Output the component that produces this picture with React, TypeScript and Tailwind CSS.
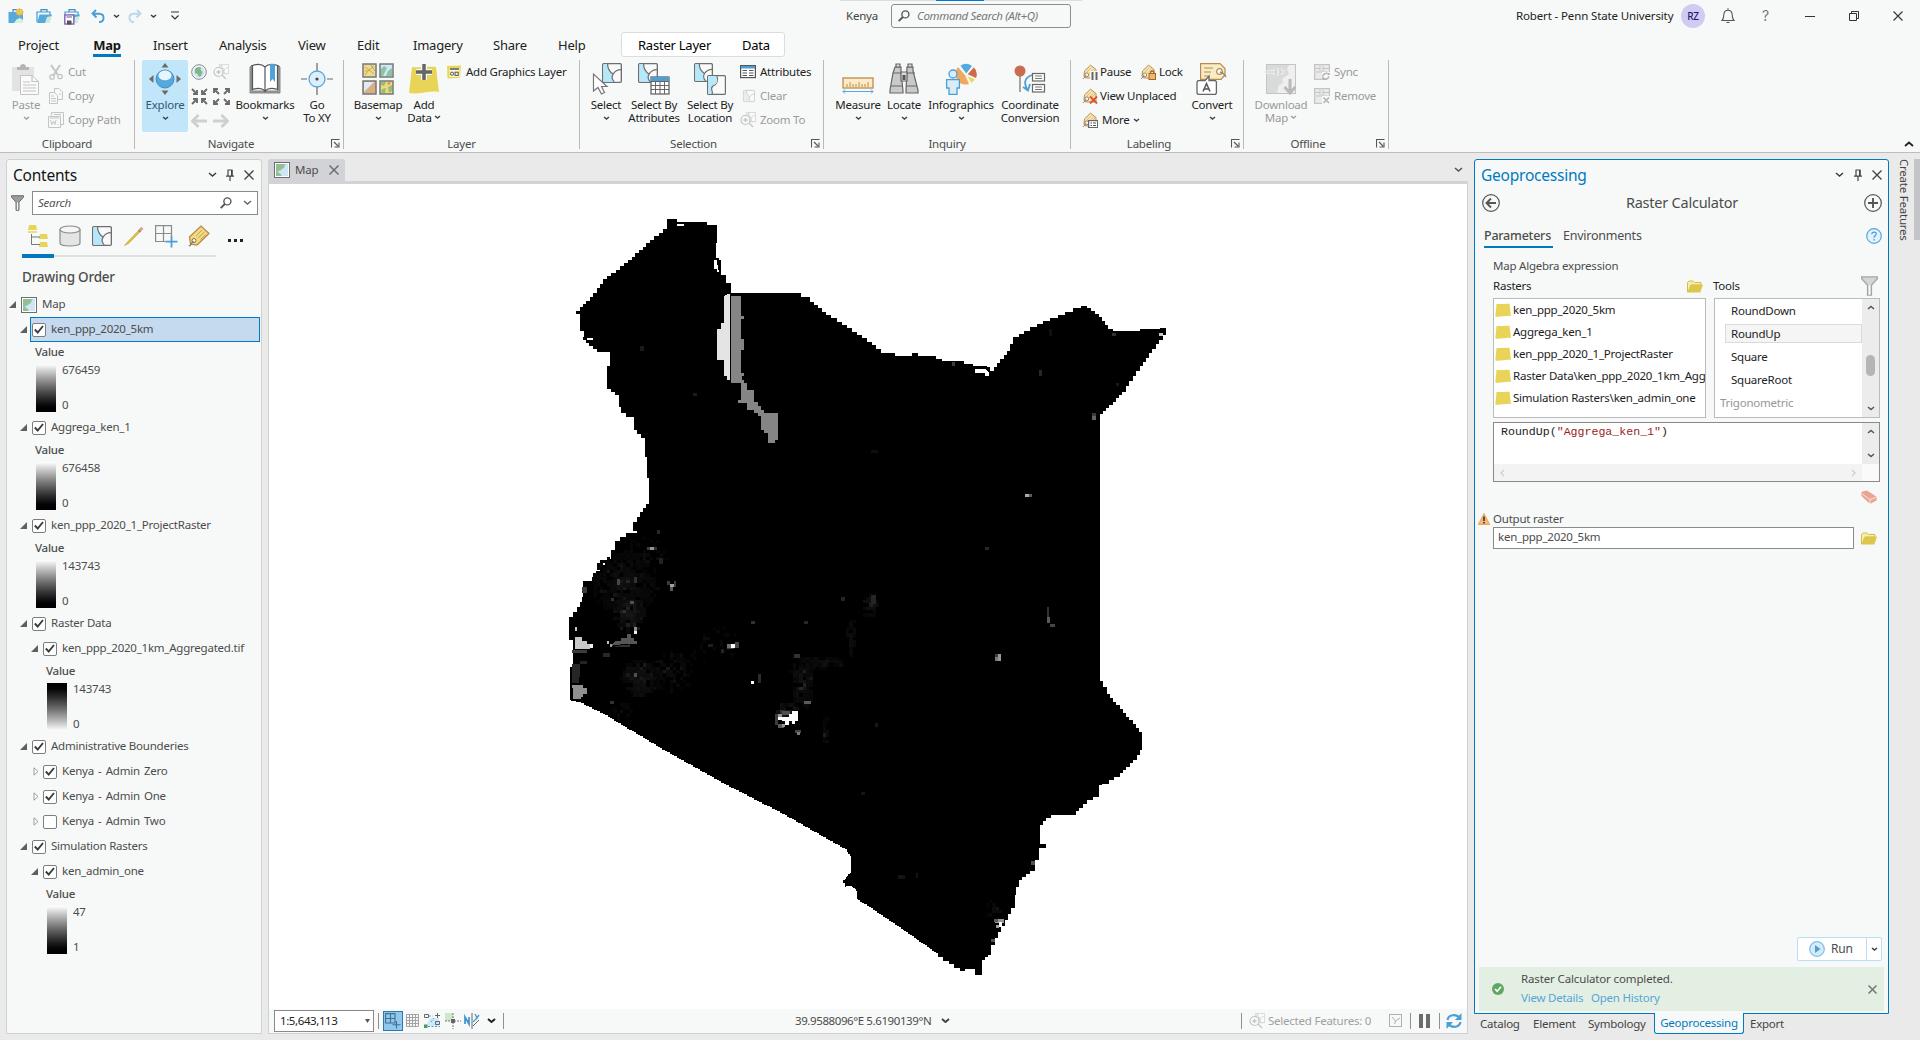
import React from "react";

type Kids = { children?: React.ReactNode };

/* ---------- icon primitives ---------- */

function Svg({ w, h, children, cls = "" }: Kids & { w: number; h: number; cls?: string }) {
  return (
    <svg width={w} height={h} viewBox={`0 0 ${w} ${h}`} fill="none" className={"block shrink-0 " + cls}>
      {children}
    </svg>
  );
}

function Chevron({ c = "#3c3c3c", w = 8, sw = 1.5, up = false }: { c?: string; w?: number; sw?: number; up?: boolean }) {
  const h = w / 2;
  const d = up ? `M1 ${h + 1}L${w / 2 + 1} 1.5L${w + 1} ${h + 1}` : `M1 1L${w / 2 + 1} ${h + 0.5}L${w + 1} 1`;
  return (
    <Svg w={w + 2} h={h + 2}>
      <path d={d} stroke={c} strokeWidth={sw} />
    </Svg>
  );
}

const Close = ({ s = 10, c = "#444", sw = 1.4 }: { s?: number; c?: string; sw?: number }) => (
  <Svg w={s} h={s}>
    <path d={`M.5 .5L${s - 0.5} ${s - 0.5}M${s - 0.5} .5L.5 ${s - 0.5}`} stroke={c} strokeWidth={sw} />
  </Svg>
);

const Pin = () => (
  <Svg w={8} h={12}>
    <path d="M2 1V7M6 1V7M1.5 1H6.5M0 7.2H8M4 7V12" stroke="#444" strokeWidth="1.2" />
    <path d="M5 1H6.5V7H5Z" fill="#444" />
  </Svg>
);

const Magnifier = ({ c = "#555", s = 12 }: { c?: string; s?: number }) => (
  <svg width={s} height={s} viewBox="0 0 12 12" fill="none" className="block shrink-0">
    <circle cx="7.4" cy="4.4" r="3.5" stroke={c} strokeWidth="1.4" />
    <path d="M4.8 7L.7 11.2" stroke={c} strokeWidth="1.8" />
  </svg>
);

const MapIcon = () => (
  <Svg w={16} h={16}>
    <rect x=".5" y=".5" width="15" height="15" fill="#fff" stroke="#6e6e6e" />
    <rect x="2" y="2" width="12" height="12" fill="#cfe6f5" />
    <path d="M2 2H12L10.500 3.500L10 6L8 7L6.500 8.500L4 9L2 11Z" fill="#93bf94" />
    <path d="M2 11L4 9L5 11L7 12L7.500 14H2Z" fill="#93bf94" />
  </Svg>
);

const FolderIcon = () => (
  <Svg w={16} h={13}>
    <path d="M.5 12V2.5L2 1H6L7.5 2.5H14V5H4L1 12Z" fill="#f6edb0" stroke="#d3bf45" />
    <path d="M3.8 4.8H16L13.3 12.5H.8Z" fill="#dcc64c" />
  </Svg>
);

const Funnel = ({ w = 13, h = 16, f = "#9b9b9b", s = "#6e6e6e" }) => (
  <svg width={w} height={h} viewBox="0 0 13 16" fill="none" className="block shrink-0" preserveAspectRatio="none">
    <path d="M.5 .7H12.5V2.2L8 7.2V15.3H5V7.2L.5 2.2Z" fill={f} stroke={s} />
    <path d="M6.5 7.4V15" stroke="#f7f9f8" strokeWidth="1.2" />
  </svg>
);

const SelTile = ({ x = 0, y = 0, s = 18, c = "#6e6e6e", f = "#b5e8fa" }) => (
  <g transform={`translate(${x} ${y}) scale(${s / 18})`}>
    <rect x=".6" y=".6" width="16.8" height="16.8" rx="1" fill="#fafafa" stroke={c} strokeWidth="1.2" />
    <path d="M1.2 1.2H5C5 6 7 8 10 10C8.5 12.5 9 15 11 16.8H1.2Z" fill={f} />
    <path d="M5 .6C5 6 7 8 10 10C8.5 12.5 9 15 11 17M10 10C11.5 7.5 14 6 17 6" stroke={c} strokeWidth="1.1" fill="none" />
  </g>
);

const Tag = ({ children }: Kids) => (
  <Svg w={16} h={16}>
    <path d="M2.5 7L8.5 1.2L14 5.5V14H3.5L2 12Z" fill="#f6e3b0" stroke="#b98a50" />
    <path d="M5 8L9 4M7 9.5L11.5 5M10 9L13 6" stroke="#dcbf85" />
    <circle cx="4.8" cy="10.8" r="1.9" fill="#fff" stroke="#9c8262" />
    <path d="M4.5 11C3 12 3 14 .8 14.8" stroke="#888" />
    {children}
  </Svg>
);

const LegendDoc = () => (
  <Svg w={16} h={14}>
    <path d="M1 1L15 .5L14 13L1.5 13.5Z" fill="#e9d65a" />
    <rect x="3.5" y="3" width="10" height="9" fill="#fbf6cf" />
    <path d="M4 4H13" stroke="#555" strokeWidth="1.5" />
    <circle cx="6" cy="8.7" r="1.6" stroke="#555" />
    <rect x="9" y="7.2" width="3.2" height="3.2" stroke="#555" />
  </Svg>
);

/* ---------- title bar ---------- */

const ProjBox = ({ open = false }: { open?: boolean }) => (
  <>
    <path d="M5 4V1.7H11V4" stroke="#3f8fc4" strokeWidth="1.2" />
    {open ? (
      <>
        <path d="M1 14V4H14V7" stroke="#3f9bd6" strokeWidth="1.2" />
        <path d="M3.5 6.5H16L13 15H1Z" fill="#56a9dd" />
        <path d="M9 15L11 9L15.5 8L13.5 15Z" fill="#cdeadf" />
      </>
    ) : (
      <>
        <rect x=".5" y="4" width="14.5" height="11" fill="#56a9dd" />
        <path d="M6 15L9 11L12 10L15 12V15Z" fill="#d9efe0" />
      </>
    )}
  </>
);

function TitleBar() {
  return (
    <div className="flex h-8 shrink-0 items-start">
      <div className="flex h-8 w-[840px] items-center">
        <div className="ml-2">
          <Svg w={16} h={16}>
            <ProjBox />
            <circle cx="11.5" cy="4" r="3" fill="#f4dd74" stroke="#dfb93c" />
            <path d="M11.5 -.5V8.5M7 4H16M8.5 1L14.5 7M14.5 1L8.5 7" stroke="#e3c04d" strokeWidth=".9" />
          </Svg>
        </div>
        <div className="ml-3"><Svg w={16} h={16}><ProjBox open /></Svg></div>
        <div className="ml-3">
          <Svg w={16} h={17}>
            <ProjBox open />
            <rect x=".8" y="7" width="9" height="9" fill="#fff" stroke="#8b6bb0" strokeWidth="1.5" />
            <rect x="2.5" y="7" width="5.5" height="3" fill="#b9a4cf" />
            <rect x="3" y="12.5" width="4.5" height="4" fill="#555" />
          </Svg>
        </div>
        <div className="ml-[11px]"><Svg w={14} h={14}><path d="M5 1L1.5 4.5L5.5 8.5M2 4.7H8.5C14 5 14 13 8 13" stroke="#4b9fd6" strokeWidth="1.9" /></Svg></div>
        <div className="ml-2"><Chevron w={5} /></div>
        <div className="ml-2"><Svg w={14} h={14}><path d="M9 1L12.500 4.500L8.500 8.500M12 4.700H5.500C0 5 0 13 6 13" stroke="#b9d8ec" strokeWidth="1.9" /></Svg></div>
        <div className="ml-2"><Chevron w={5} /></div>
        <div className="ml-[13px]"><Svg w={10} h={10}><path d="M1 1H9M1.500 4.500L5 8L8.500 4.500" stroke="#333" strokeWidth="1.2" /></Svg></div>
      </div>
      <div className="flex h-8 w-[242px] flex-col">
        <div className="flex h-px bg-[#dcdcdc] pl-24"><div className="w-12 bg-[#0078d4]" /></div>
        <div className="mt-[3px] flex h-6 items-center pl-[6px]">
          <span className="w-[45px] text-[#444]">Kenya</span>
          <div className="flex h-6 w-[180px] items-center rounded-[3px] border border-[#8e8e8e] pl-[6px]">
            <Magnifier />
            <span className="ml-[7px] italic tracking-[-0.03em] text-[#777]">Command Search (Alt+Q)</span>
          </div>
        </div>
      </div>
      <div className="flex h-8 flex-1 items-center">
        <span className="ml-[434px] w-[165px] tracking-[-0.012em] text-[#222]">Robert - Penn State University</span>
        <div className="flex size-6 items-center justify-center rounded-full bg-[#cfcbf3] text-[10px] font-medium text-[#1d1a6b]">RZ</div>
        <div className="ml-4">
          <Svg w={14} h={16}><path d="M1 12.500H13C11 10.500 11.500 9 11.200 6.500C11 3.500 9.500 2.200 7 2.200C4.500 2.200 3 3.500 2.800 6.500C2.500 9 3 10.500 1 12.500ZM7 2V.3M5.500 14.500H8.500" stroke="#555" strokeWidth="1.100" /></Svg>
        </div>
        <span className="ml-[27px] w-2 font-['Inter'] text-[14px] text-[#777]">?</span>
        <div className="ml-[35px] h-px w-[10px] bg-[#333]" />
        <div className="ml-[34px]"><Svg w={10} h={10}><path d="M.5 2.500H7.500V9.500H.500ZM2.500 2.500V.5H9.500V7.500H7.500" stroke="#333" /></Svg></div>
        <div className="ml-[34px]"><Close s={10} c="#333" sw={1.100} /></div>
      </div>
    </div>
  );
}

function TabRow() {
  const tabs: [string, string][] = [
    ["Insert", "w-[66px]"],
    ["Analysis", "w-[79px]"],
    ["View", "w-[59px]"],
    ["Edit", "w-[56px]"],
    ["Imagery", "w-[80px]"],
    ["Share", "w-[65px]"],
    ["Help", "w-[63px]"],
  ];
  return (
    <div className="flex h-7 shrink-0 items-start pl-[18px] text-[13px] text-[#222]">
      <div className="w-[75px] leading-[26px]">Project</div>
      <div className="flex h-[25px] w-[60px] flex-col items-start">
        <div className="flex h-[25px] w-7 flex-col justify-between border-b-[3px] border-[#0079c1] text-center text-[13px] leading-[26px] font-bold text-[#151515]">Map</div>
      </div>
      {tabs.map(([t, w]) => (
        <div key={t} className={w + " shrink-0 leading-[26px]"}>{t}</div>
      ))}
      <div className="flex h-[25px] w-[164px] items-center rounded-[3px] border border-[#dcdcdc] bg-white pt-px pl-4 text-black">
        <span className="w-[104px]">Raster Layer</span>
        <span>Data</span>
      </div>
    </div>
  );
}

/* ---------- ribbon ---------- */

function Group({ w, label, launcher = false, children }: Kids & { w: string; label: string; launcher?: boolean }) {
  return (
    <div className={"flex h-[89px] shrink-0 flex-col border-r border-[#b9b9b9] " + w}>
      <div className="flex h-[77px] shrink-0">{children}</div>
      <div className="flex h-[12px] items-center">
        <span className="flex-1 pt-px text-center leading-3 text-[#4c4c4c]">{label}</span>
        {launcher && (
          <div className="flex w-4 justify-center">
            <Svg w={9} h={9}><path d="M.5 8.500V.5H8.500M3 3L7 7M8 3.500V8H3.500" stroke="#555" strokeWidth="1.100" /></Svg>
          </div>
        )}
      </div>
    </div>
  );
}

function Big({ w, icon, lines, dim = false, drop = "none", on = false }: { w: string; icon: React.ReactNode; lines: string[]; dim?: boolean; drop?: "none" | "below" | "inline"; on?: boolean }) {
  const c = dim ? "#a0a0a0" : "#444";
  return (
    <div className={"flex h-[72px] shrink-0 flex-col items-center rounded-[2px] " + w + (on ? " bg-[#c1e5f9]" : "")}>
      <div className="flex h-[38px] items-center justify-center">{icon}</div>
      {lines.map((l, i) => (
        <div key={l} className={"flex items-center gap-[2px] leading-[13px] whitespace-nowrap " + (dim ? "text-[#9a9a9a]" : on ? "text-[#2f5878]" : "text-[#222]")}>
          {l}
          {drop === "inline" && i === lines.length - 1 && <Chevron w={5} c={c} />}
        </div>
      ))}
      {drop === "below" && <div className="mt-[5px]"><Chevron w={5} c={c} /></div>}
    </div>
  );
}

function Small({ icon, text, dim = false, w = "", gap = "gap-1", drop = false }: { icon: React.ReactNode; text: string; dim?: boolean; w?: string; gap?: string; drop?: boolean }) {
  return (
    <div className={`flex h-6 items-center ${gap} ${w}`}>
      <div className="flex w-4 shrink-0 justify-center">{icon}</div>
      <span className={"pb-px whitespace-nowrap " + (dim ? "text-[#9a9a9a]" : "text-[#222]")}>{text}</span>
      {drop && <Chevron w={5} c="#444" />}
    </div>
  );
}

const G = "#c4c4c4";

const PasteIcon = () => (
  <Svg w={32} h={32}>
    <path d="M2 4H24V28H2Z" fill="#e3e3e3" />
    <path d="M7 4H10C10 0 16 0 16 4H19V7H7Z" fill="#b5b5b5" />
    <path d="M10.500 12.500H22L28.500 18.500V31.500H10.500Z" fill="#fafafa" stroke={G} />
    <path d="M22 12.500V18.500H28.500M13 19H20M13 22H26M13 25H26M13 28H26" stroke={G} strokeWidth="1.200" />
  </Svg>
);
const CutIcon = () => (
  <Svg w={16} h={16}><path d="M3 1L10 11M12 1L7 9L5 12" stroke={G} strokeWidth="2" /><circle cx="4" cy="13" r="2.200" stroke={G} strokeWidth="1.300" /><circle cx="12" cy="12.500" r="2.200" stroke={G} strokeWidth="1.300" /></Svg>
);
const CopyIcon = () => (
  <Svg w={16} h={16}><path d="M6.500 .5H11L14.500 4V11.500H6.500Z" stroke={G} /><path d="M1.500 4.500H6.500L9.500 7.500V15.500H1.500Z" fill="#f7f9f8" stroke={G} /><path d="M3 8H6M3 10.500H8M3 13H8M11 6H13" stroke={G} /></Svg>
);
const CopyPathIcon = () => (
  <Svg w={16} h={16}><path d="M3.500 3.500V.5H15.500V12.500H13" stroke={G} /><path d="M.500 4.500H12.500V15.500H.500Z" fill="#f7f9f8" stroke={G} /><path d="M2.500 8L4 12.500L5.500 9L7 12.500L8 8M9.500 12.500H10.500M2 6H11M6 2.500H13" stroke={G} /></Svg>
);
const ExploreIcon = () => (
  <Svg w={32} h={36}>
    <path d="M16 2L19.500 6.500H12.500ZM16 34L19.500 29.500H12.500ZM0 18L4.500 14V22ZM32 18L27.500 14V22Z" fill="#6b6b6b" />
    <circle cx="16" cy="18" r="9" fill="#56a9dd" stroke="#3f8fc4" />
    <ellipse cx="16" cy="14.500" rx="6.500" ry="5" fill="#e8f5fc" />
    <path d="M8 15C11 21 21 21 24 15L24 19H8Z" fill="#56a9dd" />
  </Svg>
);
const Globe = () => (
  <Svg w={16} h={16}><circle cx="8" cy="8" r="7.300" fill="#f4f8fa" stroke="#888" /><circle cx="8" cy="8" r="5.500" fill="#c9e4f6" /><path d="M4 5L7 3L10 3.500L9.500 6L11.500 8L10 12L8 13L6.500 10L4 9Z" fill="#7fb788" /></Svg>
);
const ZoomSel = () => (
  <Svg w={16} h={16}><SelTile x={6} y={0} s={10} c={G} f="#e6e6e6" /><circle cx="5.500" cy="8" r="4.500" fill="#f7f9f8" stroke={G} strokeWidth="1.200" /><path d="M3.500 8H7.500M5.500 6V10M9 11L13 15" stroke={G} strokeWidth="1.300" /></Svg>
);
function Arrows({ out = false }: { out?: boolean }) {
  const q = out ? "M0 0L5 5M0 4V0H4" : "M0 0L5 5M5 1V5H1";
  return (
    <Svg w={17} h={17}>
      {[0, 90, 180, 270].map((a) => (
        <path key={a} d={q} transform={`rotate(${a} 8.5 8.5) translate(1 1)`} stroke="#6b6b6b" strokeWidth="1.900" />
      ))}
    </Svg>
  );
}
const NavArrow = ({ flip = false }: { flip?: boolean }) => (
  <Svg w={16} h={14} cls={flip ? "-scale-x-100" : ""}><path d="M7.500 1L1.500 7L7.500 13M2 7H16" stroke="#cfcfcf" strokeWidth="2.800" /></Svg>
);
const Book = () => (
  <Svg w={32} h={32}>
    <path d="M1 4L3 2V28H29V2L31 4V30H1Z" fill="#a5a5a5" stroke="#6e6e6e" strokeWidth=".8" />
    <path d="M3.500 2.500C8 1 13 1 16 4V28C13 25 8 25 3.500 26.500ZM16 4C19 1 24 1 28.500 2.500V26.500C24 25 19 25 16 28Z" fill="#fff" stroke="#555" strokeWidth="1.200" />
    <path d="M21 1H26V19L23.500 16L21 19Z" fill="#4fa3d9" />
  </Svg>
);
const GoXY = () => (
  <Svg w={32} h={32}><path d="M16 0V8M16 24V32M0 16H6M26 16H32" stroke="#666" strokeWidth="1.200" /><circle cx="16" cy="16" r="8" fill="#dceffa" stroke="#56a9dd" strokeWidth="1.300" /><circle cx="16" cy="16" r="1.600" fill="#444" /></Svg>
);
const Basemap = () => (
  <Svg w={32} h={32}>
    <rect x="1" y="1" width="13" height="13" fill="#eedb8d" stroke="#777" strokeWidth="1.500" />
    <path d="M3 4L7 7L12 3M3 12L7 7L12 11M3 8H6" stroke="#d5a44d" /><path d="M9 2L13 8" stroke="#87b37a" />
    <rect x="18" y="1" width="13" height="13" fill="#cfe8f8" stroke="#777" strokeWidth="1.500" />
    <path d="M19 6L22 3L25 5L23 9L21 13H19ZM26 8L30 5V13H24Z" fill="#8cc3a0" />
    <rect x="1" y="18" width="13" height="13" fill="#d8ae86" stroke="#777" strokeWidth="1.500" />
    <path d="M2 19H12L9 22L7 24L2 29Z" fill="#dfeaf2" />
    <rect x="18" y="18" width="13" height="13" fill="#f3d87a" stroke="#777" strokeWidth="1.500" />
    <path d="M19 19H24L22 23L19 22ZM26 24L30 22V28L27 30ZM20 26L24 25L23 30H19Z" fill="#8fbf7f" /><path d="M25 20L29 19L27 22ZM22 24L24 22" fill="#e07a4f" />
  </Svg>
);
const AddData = () => (
  <Svg w={32} h={32}><path d="M4 4C10 5 20 3 28 4L31 29C22 27 12 32 1 30Z" fill="#e8d558" /><path d="M16 1V17M8 9H24" stroke="#f7f9f8" strokeWidth="6" /><path d="M16 1V17M8 9H24" stroke="#666" strokeWidth="3.500" /></Svg>
);
const SelectIcon = () => (
  <Svg w={32} h={32} cls="translate-x-[1px]"><SelTile x={11} y={0} s={20} /><path d="M2.500 11V28L7 24.500L10.500 31L13.500 29.500L10.500 23.500H16Z" fill="#fff" stroke="#777" strokeWidth="1.200" /></Svg>
);
const SelAttr = () => (
  <Svg w={32} h={32}><SelTile s={20} /><rect x="13" y="14" width="18" height="17" fill="#fff" stroke="#666" strokeWidth="1.300" /><rect x="13" y="14" width="18" height="4" fill="#4b9fd6" /><path d="M13 18.500H31M13 22.500H31M13 26.500H31M17.500 18V31M22 18V31M26.500 18V31" stroke="#666" /></Svg>
);
const SelLoc = () => (
  <Svg w={32} h={32}><SelTile s={19} /><rect x="13.600" y="12.600" width="17.800" height="18.800" rx="1" fill="#fafafa" stroke="#6e6e6e" strokeWidth="1.200" /><path d="M14 13H23C24 18 22 20 18 24V31H14Z" fill="#b5e8fa" /><path d="M23 13C24.500 18 24 21 19 23C15 26 20 28 18 31" stroke="#6e6e6e" strokeWidth="1.100" /></Svg>
);
const TableIcon = () => (
  <Svg w={16} h={14}><rect x=".600" y=".600" width="14.800" height="12" fill="#fff" stroke="#555" strokeWidth="1.200" /><rect x="1" y="1" width="14" height="2.500" fill="#4b9fd6" /><path d="M2.500 5.500H7M2.500 8H7M2.500 10.500H7M9 5.500H13.500M9 8H13.500M9 10.500H13.500" stroke="#555" /></Svg>
);
const ClearIcon = () => <Svg w={14} h={14}><SelTile x={2} y={1} s={12} c={G} f="#ececec" /></Svg>;
const Ruler = () => (
  <Svg w={32} h={32}><rect x="1" y="15" width="30" height="10" fill="#fcebc9" stroke="#c08a4a" strokeWidth="1.300" /><path d="M5 24V21M8 24V19M11 24V21M14 24V21M17 24V19M20 24V21M23 24V21M26 24V19" stroke="#c08a4a" /><path d="M1 28.500H31M3 26.500L1 28.500L3 30.500M29 26.500L31 28.500L29 30.500" stroke="#56a9dd" /></Svg>
);
const Binoculars = () => (
  <Svg w={32} h={32}>
    <path d="M7 4H13V8L15 28V30H2V27L5 10ZM19 4H25V8L30 27V30H18V28Z" fill="#c9c9c9" stroke="#666" strokeWidth="1.200" />
    <path d="M8 1H12V4H8ZM20 1H24V4H20ZM13 9H19V18H13Z" fill="#ddd" stroke="#666" strokeWidth="1.200" />
    <rect x="14.500" y="12" width="3" height="5" fill="#555" /><path d="M3 23H14M18 23H29M5 10H13M19 10H27" stroke="#666" />
  </Svg>
);
const Info = () => (
  <Svg w={32} h={32}>
    <path d="M21 11L15 3A10 10 0 0 1 27 3Z" fill="#56a9dd" /><path d="M22 11L28.500 4A10 10 0 0 1 31 15Z" fill="#cf6a4a" /><path d="M22 13L30 16A10 10 0 0 1 26 20Z" fill="#ead95c" /><path d="M20 12L13 4A11 11 0 0 0 12 17A11 11 0 0 0 24 21Z" fill="#f0a95c" />
    <path d="M21 11L15 3M22 11L29 3M22 12L31 16M21 12L26 21" stroke="#f7f9f8" strokeWidth="1.200" />
    <circle cx="8" cy="11" r="4" fill="#d9edf9" stroke="#4b9fd6" strokeWidth="1.300" /><path d="M1.600 16.600H14.400V25H12V31.400H4V25H1.600Z" fill="#d9edf9" stroke="#4b9fd6" strokeWidth="1.300" />
  </Svg>
);
const Coord = () => (
  <Svg w={32} h={32}>
    <circle cx="6" cy="8" r="5.500" fill="#cb6b52" /><path d="M6 13V29" stroke="#777" strokeWidth="1.300" />
    <path d="M18 12C10 15 10 20 13 26M9 24L14 27.500L16 21" stroke="#4b9fd6" strokeWidth="1.800" />
    <rect x="18.500" y="10.500" width="12" height="7.500" fill="#fff" stroke="#666" strokeWidth="1.200" /><rect x="18.500" y="21.500" width="12" height="7.500" fill="#fff" stroke="#666" strokeWidth="1.200" /><path d="M21 13H28M21 15.500H28M21 24H28M21 26.500H28" stroke="#777" />
  </Svg>
);
const Convert = () => (
  <Svg w={32} h={32}>
    <path d="M4.600 .600H24L29 5.500V12L25 16.400H4.600Z" fill="#f8ecc4" stroke="#b98a50" strokeWidth="1.200" /><path d="M8 5H17M8 9H15M8 13H12" stroke="#b98a50" /><circle cx="23.500" cy="8.500" r="2.800" fill="#fff" stroke="#b98a50" strokeWidth="1.200" /><path d="M24 9C28 10 29 12 30 14" stroke="#888" strokeWidth="1.400" />
    <path d="M2 17.600H9L13 13V17.600H19.500L20.400 19V30L19.500 31.400H2L1 30V19Z" fill="#fff" stroke="#666" strokeWidth="1.300" /><path d="M7 28.500L10.500 20.500L14 28.500M8.500 26H12.500" stroke="#555" strokeWidth="1.500" />
  </Svg>
);
const Download = () => (
  <Svg w={32} h={32}><rect x="1.500" y="1.500" width="29" height="29" fill="#eeefee" stroke={G} /><path d="M2 2H24L22 6L24 11L17 16L18 20L14 22L12 30H2Z" fill="#d9dbda" /><path d="M0 9H11M11 5V13M15 5V13M15 9H20" stroke="#f7f9f8" strokeWidth="3" /><path d="M0 9H11M11 5V13M15 5V13M15 9H20" stroke={G} strokeWidth="1.200" /><path d="M25 16V30M19.500 24L25 30L30.500 24" stroke="#b9bab9" strokeWidth="3" /></Svg>
);
const SyncIcon = ({ x = false }: { x?: boolean }) => (
  <Svg w={16} h={16}><rect x=".600" y=".600" width="14.800" height="14.800" fill="#e9eae9" stroke={G} strokeWidth="1.200" /><path d="M0 4.500H6M6 2V7M9 2V7M9 4.500H15M2 8H13" stroke={G} /><rect x="8" y="8" width="8" height="8" fill="#f7f9f8" /><path d={x ? "M9.500 9.500L15 15M15 9.500L9.500 15" : "M9 12C10 8.500 14 8.500 15 11V9M15 12.500C14 16 10 15.500 9 14V16"} stroke="#b4b4b4" strokeWidth="1.600" /></Svg>
);

function Ribbon() {
  return (
    <div className="flex h-[93px] shrink-0 border-b border-[#bdbdbd]">
      <Group w="w-[135px]" label="Clipboard">
        <div className="w-1" />
        <Big w="w-[44px]" icon={<PasteIcon />} lines={["Paste"]} dim drop="below" />
        <div className="flex flex-col">
          <Small dim icon={<CutIcon />} text="Cut" />
          <Small dim icon={<CopyIcon />} text="Copy" />
          <Small dim icon={<CopyPathIcon />} text="Copy Path" />
        </div>
      </Group>
      <Group w="w-[209px]" label="Navigate" launcher>
        <div className="w-[7px]" />
        <Big w="w-[46px]" icon={<ExploreIcon />} lines={["Explore"]} on drop="below" />
        <div className="grid h-[72px] w-[44px] grid-cols-2 place-items-center">
          <Globe /><ZoomSel /><Arrows /><Arrows out /><NavArrow /><NavArrow flip />
        </div>
        <Big w="w-[66px]" icon={<Book />} lines={["Bookmarks"]} drop="below" />
        <Big w="w-[38px]" icon={<GoXY />} lines={["Go", "To XY"]} />
      </Group>
      <Group w="w-[236px]" label="Layer">
        <div className="w-2" />
        <Big w="w-[52px]" icon={<Basemap />} lines={["Basemap"]} drop="below" />
        <Big w="w-[40px]" icon={<AddData />} lines={["Add", "Data"]} drop="inline" />
        <div className="ml-[2px]"><Small icon={<LegendDoc />} text="Add Graphics Layer" /></div>
      </Group>
      <Group w="w-[244px]" label="Selection" launcher>
        <div className="w-[6px]" />
        <Big w="w-[40px]" icon={<SelectIcon />} lines={["Select"]} drop="below" />
        <Big w="w-[56px]" icon={<SelAttr />} lines={["Select By", "Attributes"]} />
        <Big w="w-[56px]" icon={<SelLoc />} lines={["Select By", "Location"]} />
        <div className="ml-[2px] flex flex-col">
          <Small icon={<TableIcon />} text="Attributes" />
          <Small dim icon={<ClearIcon />} text="Clear" />
          <Small dim icon={<ZoomSel />} text="Zoom To" />
        </div>
      </Group>
      <Group w="w-[247px]" label="Inquiry">
        <div className="w-[9px]" />
        <Big w="w-[50px]" icon={<Ruler />} lines={["Measure"]} drop="below" />
        <Big w="w-[42px]" icon={<Binoculars />} lines={["Locate"]} drop="below" />
        <Big w="w-[72px]" icon={<Info />} lines={["Infographics"]} drop="below" />
        <Big w="w-[66px]" icon={<Coord />} lines={["Coordinate", "Conversion"]} />
      </Group>
      <Group w="w-[173px]" label="Labeling" launcher>
        <div className="ml-[11px] flex w-[104px] flex-col">
          <div className="flex">
            <Small w="w-[58px]" gap="gap-[2px]" icon={<Tag><rect x="8" y="7" width="8" height="9" fill="#f7f9f8" /><path d="M10.500 8V16M14.500 8V16" stroke="#666" strokeWidth="2" /></Tag>} text="Pause" />
            <Small gap="gap-[3px]" icon={<Tag><path d="M10.500 10V8.500C10.500 6.500 14 6.500 14 8.500V10" stroke="#a5682a" strokeWidth="1.300" /><rect x="9" y="9.500" width="6.500" height="6" fill="#f3b46c" stroke="#a5682a" /></Tag>} text="Lock" />
          </div>
          <Small gap="gap-[2px]" icon={<Tag><path d="M8 8.500L15 15.500M15 8.500L8 15.500" stroke="#d9532c" strokeWidth="1.800" /></Tag>} text="View Unplaced" />
          <Small gap="gap-1" icon={<Tag><rect x="6.600" y="8.600" width="9" height="7" fill="#fff" stroke="#666" strokeWidth="1.200" /><path d="M8.500 11H10M11 11H14M8.500 13.500H10M11 13.500H14" stroke="#555" /></Tag>} text="More" drop />
        </div>
        <Big w="w-[52px]" icon={<Convert />} lines={["Convert"]} drop="below" />
      </Group>
      <Group w="w-[145px]" label="Offline" launcher>
        <div className="w-[7px]" />
        <Big w="w-[60px]" icon={<Download />} lines={["Download", "Map"]} dim drop="inline" />
        <div className="ml-[3px] flex flex-col">
          <Small dim icon={<SyncIcon />} text="Sync" />
          <Small dim icon={<SyncIcon x />} text="Remove" />
        </div>
      </Group>
      <div className="flex flex-1 items-end justify-end pr-[6px] pb-[5px]"><Chevron up w={8} c="#222" sw={1.800} /></div>
    </div>
  );
}

/* ---------- contents pane ---------- */

const Check = ({ on = true }: { on?: boolean }) => (
  <div className="flex size-[14px] shrink-0 items-center justify-center rounded-[2px] border border-[#7d7d7d] bg-white">
    {on && <Svg w={10} h={9}><path d="M.8 4.500L3.700 7.500L9 1" stroke="#3c3c3c" strokeWidth="1.900" /></Svg>}
  </div>
);

const Tri = ({ open = true }: { open?: boolean }) =>
  open ? (
    <Svg w={7} h={7}><path d="M7 0V7H0Z" fill="#5f5f5f" /></Svg>
  ) : (
    <Svg w={7} h={9} cls="translate-x-[2px]"><path d="M1 .8L5 4.500L1 8.200Z" stroke="#9a9a9a" fill="#fff" /></Svg>
  );

function TreeRow({ text, deep = false, open = true, on = true, sel = false }: { text: string; deep?: boolean; open?: boolean; on?: boolean; sel?: boolean }) {
  return (
    <div className={"flex h-[25px] items-center " + (deep ? "pl-[24px]" : "pl-[13px]")}>
      <Tri open={open} />
      <div className={"ml-[3px] flex h-[25px] flex-1 items-center border pl-[1px] " + (sel ? "mr-px border-[#0079c1] bg-[#c5daee]" : "border-transparent")}>
        <Check on={on} />
        <span className={"ml-[5px] pb-[2px] text-[#4c4c4c]" + (text.includes(" - ") ? " [word-spacing:1.4px]" : "")}>{text}</span>
      </div>
    </div>
  );
}

function Ramp({ hi, lo, deep = false, flip = false }: { hi: string; lo: string; deep?: boolean; flip?: boolean }) {
  return (
    <div className={"h-[73px] text-[#4c4c4c] " + (deep ? "pl-[40px]" : "pl-[29px]")}>
      <div className="-ml-px h-[22px] leading-[20px] font-medium">Value</div>
      <div className="flex h-[48px]">
        <div className={"h-[48px] w-5 " + (flip ? "bg-linear-to-b from-black to-white" : "bg-linear-to-b from-white to-black")} />
        <div className="ml-[6px] flex flex-col justify-between pb-px">
          <span className="leading-[12px]">{hi}</span>
          <span className="leading-[13px]">{lo}</span>
        </div>
      </div>
    </div>
  );
}

function Contents() {
  return (
    <div className="mt-[6px] ml-[6px] flex h-[875px] w-[256px] shrink-0 flex-col rounded-t-[3px] border border-[#cfd0d2] bg-[#f7f9f8]">
      <div className="flex h-[31px] items-center pb-[2px] pl-[6px]">
        <span className="w-[195px] text-[15.5px] text-[#151515]">Contents</span>
        <Chevron w={7} />
        <div className="ml-[9px]"><Pin /></div>
        <div className="ml-[10px]"><Close /></div>
      </div>
      <div className="flex h-6 items-center pl-1">
        <Funnel />
        <div className="ml-2 flex h-6 w-[226px] items-center border border-[#8a8a8a] bg-white pl-[5px]">
          <span className="w-[182px] italic text-[#555]">Search</span>
          <Magnifier />
          <div className="ml-[11px]"><Chevron w={7} c="#666" /></div>
        </div>
      </div>
      <div className="mt-[8px] flex h-[26px] items-center pl-[18px]">
        <Svg w={24} h={24}><path d="M4 1H11L12 6H3ZM15 10H22L23 15H14ZM15 18H22L23 23H14Z" fill="#e8d558" /><path d="M3 8H12" stroke="#e8d558" strokeWidth="1.500" /><path d="M6.500 10V20.500H15M6.500 13H15" stroke="#777" /></Svg>
        <Svg w={22} h={22} cls="ml-[10px]"><path d="M1 4V18C1 22 21 22 21 18V4" fill="#e4e4e4" stroke="#8a8a8a" strokeWidth="1.200" /><ellipse cx="11" cy="4.500" rx="10" ry="3.500" fill="#f6f6f6" stroke="#8a8a8a" strokeWidth="1.200" /></Svg>
        <Svg w={20} h={20} cls="ml-[11px]"><SelTile s={20} /></Svg>
        <Svg w={20} h={20} cls="ml-[12px]"><path d="M3 16.500L15.500 3.500L17 5L4.500 17.500L.5 19.500Z" fill="#e2c53c" stroke="#b79a3a" strokeWidth=".6" /><path d="M15 3L17.500 .800L19.500 3L17.300 5Z" fill="#e79a8a" /><path d="M14.500 4L16.500 6" stroke="#888" strokeWidth="1.500" /></Svg>
        <Svg w={23} h={23} cls="ml-[11px]"><path d="M.600 .600H16.500V16.500H.600ZM8.500 .600V16.500M.600 8.500H16.500" stroke="#8a8a8a" strokeWidth="1.200" /><path d="M16.500 11V22.500M10.500 16.700H22.500" stroke="#f7f9f8" strokeWidth="4" /><path d="M16.500 11V22.500M10.500 16.700H22.500" stroke="#4b9fd6" strokeWidth="1.800" /></Svg>
        <Svg w={22} h={22} cls="ml-[10px]"><path d="M1.500 12L13 1L21 8.500L9 20L2.500 19Z" fill="#f2d985" stroke="#b9863f" strokeWidth="1.200" /><path d="M8 11L14 5M10 13L16.500 7M12.500 14.500L18 9.500" stroke="#c9a458" /><circle cx="6" cy="15.500" r="2" fill="#fff" stroke="#8c6a3c" /><path d="M5.500 16C3 17.500 4 20 .800 21" stroke="#777" strokeWidth="1.200" /></Svg>
        <div className="mt-2 ml-[18px] flex gap-[3px]"><i className="size-[3px] bg-[#222]" /><i className="size-[3px] bg-[#222]" /><i className="size-[3px] bg-[#222]" /></div>
      </div>
      <div className="mt-[5px] ml-[15px] flex h-1 w-[194px] items-center"><div className="h-1 w-8 bg-[#0079c1]" /><div className="h-[2px] flex-1 bg-[#dfe0e0]" /></div>
      <div className="mt-[8px] ml-[15px] h-[26px] text-[13.5px] leading-[23px] font-medium text-[#4c4c4c]">Drawing Order</div>
      <div className="flex h-[25px] items-center pl-[2px] text-[#4c4c4c]">
        <Tri /><div className="ml-[5px]"><MapIcon /></div><span className="ml-[5px] pb-[2px]">Map</span>
      </div>
      <TreeRow text="ken_ppp_2020_5km" sel />
      <Ramp hi="676459" lo="0" />
      <TreeRow text="Aggrega_ken_1" />
      <Ramp hi="676458" lo="0" />
      <TreeRow text="ken_ppp_2020_1_ProjectRaster" />
      <Ramp hi="143743" lo="0" />
      <TreeRow text="Raster Data" />
      <TreeRow deep text="ken_ppp_2020_1km_Aggregated.tif" />
      <Ramp deep flip hi="143743" lo="0" />
      <TreeRow text="Administrative Bounderies" />
      <TreeRow deep open={false} text="Kenya - Admin Zero" />
      <TreeRow deep open={false} text="Kenya - Admin One" />
      <TreeRow deep open={false} on={false} text="Kenya - Admin Two" />
      <TreeRow text="Simulation Rasters" />
      <TreeRow deep text="ken_admin_one" />
      <Ramp deep hi="47" lo="1" />
    </div>
  );
}

/* ---------- raster map ---------- */

// Raster cells are CW x CH in map drawing units.
const CW = 8.15;
const CH = 10;

type Pt = [number, number];

// Outline going clockwise from the northern tip.
const OUTLINE: Pt[] = [
  [311, 57], [335, 57], [335, 66], [408, 66], [408, 76], [434, 79], [433, 130], [430, 175], [438, 180], [444, 225], [455, 248], [467, 262], [467, 279],
  [621, 279], [640, 292], [662, 305], [700, 345], [740, 375], [790, 415], [835, 458], [870, 467], [911, 467], [911, 459], [926, 459], [926, 467], [958, 469], [984, 484], [1040, 492], [1060, 497],
  [1095, 502], [1103, 513], [1145, 454], [1160, 412], [1200, 382], [1250, 355], [1305, 325], [1325, 319], [1340, 325], [1370, 350], [1392, 387], [1405, 394], [1470, 387], [1520, 385], [1534, 389], [1534, 405],
  [1500, 460], [1470, 512], [1435, 575], [1395, 625], [1371, 650], [1371, 1443], [1388, 1482], [1420, 1528], [1468, 1595], [1476, 1615], [1476, 1650], [1462, 1680], [1420, 1730], [1395, 1752], [1377, 1755], [1370, 1790], [1340, 1812], [1312, 1845], [1262, 1846],
  [1240, 1862], [1224, 1888], [1224, 1933], [1240, 1935], [1240, 1945], [1222, 1950], [1222, 1980], [1212, 2012], [1180, 2040], [1165, 2085], [1163, 2125], [1147, 2160], [1130, 2195], [1115, 2235], [1106, 2265], [1090, 2280], [1082, 2326], [1066, 2326], [1066, 2308],
  [1058, 2308], [1042, 2314], [975, 2260], [870, 2170], [780, 2097], [777, 2072], [765, 2057], [750, 2060], [743, 2040], [762, 2015], [762, 1968], [752, 1948], [700, 1912], [600, 1842], [450, 1748], [300, 1645], [160, 1542], [100, 1506], [77, 1500], [74, 1400], [80, 1320], [71, 1250], [90, 1220],
  [104, 1192], [106, 1142], [128, 1130], [148, 1095], [170, 1078], [173, 1050], [183, 1022], [210, 1000], [238, 992], [229, 965], [245, 935], [268, 900], [268, 835], [262, 770], [258, 715], [238, 690], [230, 650], [210, 638], [198, 620], [193, 585], [173, 567], [163, 497], [171, 455],
  [140, 448], [120, 430], [106, 410], [108, 392], [98, 375], [97, 342], [89, 332], [122, 292], [155, 238], [215, 180], [270, 120], [311, 78],
];

// Turns long diagonal runs into cell sized steps; the south-west border has finer ones.
function steppedPath(points: Pt[]): string {
  const out: string[] = [`M${points[0][0]} ${points[0][1]}`];
  for (let i = 0; i < points.length; i++) {
    const [x0, y0] = points[i];
    const [x1, y1] = points[(i + 1) % points.length];
    const dx = x1 - x0;
    const dy = y1 - y0;
    const fine = y0 > 1450 && x0 <= 975 ? 2.5 : 1;
    const n = Math.max(1, Math.round(Math.min(Math.abs(dx) / CW, Math.abs(dy) / CH) * fine));
    for (let k = 1; k <= n; k++) {
      out.push(`H${(x0 + (dx * k) / n).toFixed(1)}V${(y0 + (dy * k) / n).toFixed(1)}`);
    }
  }
  return out.join("") + "Z";
}

// cx, cy, rx, ry, cell count, brightest level
const CLUSTERS: [number, number, number, number, number, number][] = [
  [205, 1145, 80, 95, 420, 30],
  [215, 1235, 38, 55, 160, 52],
  [243, 1430, 45, 55, 220, 44],
  [320, 1410, 50, 60, 90, 26],
  [640, 1450, 28, 85, 160, 34],
  [690, 1382, 50, 18, 60, 30],
  [760, 1310, 9, 60, 34, 34],
  [805, 1212, 20, 30, 34, 42],
  [600, 1535, 26, 28, 50, 60],
  [260, 1060, 50, 60, 40, 26],
  [697, 1590, 12, 40, 24, 32],
  [420, 1330, 70, 60, 30, 20],
  [195, 1525, 25, 25, 16, 24],
  [1110, 2125, 20, 30, 12, 34],
];

function noiseCells() {
  let s = 20205;
  const rnd = () => {
    s = (s * 1664525 + 1013904223) % 4294967296;
    return s / 4294967296;
  };
  const cells: { x: number; y: number; v: number }[] = [];
  for (const [cx, cy, rx, ry, n, top] of CLUSTERS) {
    for (let i = 0; i < n; i++) {
      const a = rnd() * Math.PI * 2;
      const r = Math.pow(rnd(), 0.6);
      cells.push({
        x: Math.round((cx + Math.cos(a) * r * rx) / CW) * CW,
        y: Math.round((cy + Math.sin(a) * r * ry) / CH) * CH,
        v: Math.round(top * (0.3 + 0.4 * rnd() * rnd() + (rnd() > 0.94 ? 0.5 : 0)) * (1.15 - 0.7 * r)),
      });
    }
  }
  return cells;
}

// x, y, width, height, gray level
const SPOTS: [number, number, number, number, number][] = [
  [1188, 882, 10, 9, 170], [1198, 882, 7, 9, 90], [1352, 639, 10, 10, 60], [1352, 649, 10, 10, 100], [1516, 399, 10, 9, 200], [1401, 398, 10, 9, 50],
  [1223, 511, 7, 17, 40], [1246, 388, 8, 19, 16], [244, 438, 10, 14, 26], [376, 579, 9, 9, 28], [1009, 487, 8, 10, 60], [1411, 548, 8, 10, 24], [810, 750, 18, 8, 14],
  [287, 990, 8, 12, 44], [104, 1160, 10, 20, 60], [738, 1192, 10, 10, 36], [812, 1185, 10, 26, 38], [648, 1262, 9, 9, 40],
  [1114, 1362, 8, 10, 60], [1122, 1362, 8, 20, 150], [1114, 1372, 8, 10, 120], [1241, 1222, 6, 30, 50], [1243, 1250, 6, 20, 90], [1250, 1272, 12, 8, 70], [1090, 1041, 10, 8, 40],
  [1114, 2158, 24, 10, 150], [1124, 2166, 8, 16, 255], [1112, 2156, 10, 10, 90], [1116, 2176, 8, 8, 160], [1202, 1984, 10, 10, 80], [1106, 2216, 8, 10, 80],
  [878, 2024, 16, 14, 20], [920, 2018, 6, 16, 20], [786, 1776, 10, 8, 20], [820, 1570, 8, 12, 24],
];

// Same layout, on the finer grid of the western counties.
const WEST_SPOTS: [number, number, number, number, number][] = [
  [262, 81, 8, 9, 60], [270, 81, 12, 9, 150], [282, 81, 8, 9, 50], [292, 31, 8, 10, 40], [298, 113, 12, 18, 34], [322, 184, 8, 12, 60], [330, 192, 12, 10, 160], [342, 184, 6, 18, 60], [330, 202, 10, 10, 90],
  [172, 178, 8, 16, 70], [222, 172, 10, 16, 50], [211, 243, 10, 10, 80], [152, 233, 10, 10, 50], [222, 322, 8, 10, 140], [222, 332, 8, 10, 240], [45, 320, 5, 12, 200], [90, 372, 9, 11, 240],
  [37, 390, 45, 8, 60], [60, 424, 20, 7, 36], [140, 364, 8, 8, 190], [150, 372, 6, 10, 150], [130, 400, 20, 12, 40], [222, 460, 8, 10, 80], [150, 543, 12, 10, 50],
  [502, 373, 10, 10, 110], [512, 373, 12, 10, 250], [524, 365, 12, 18, 70], [502, 383, 20, 5, 60], [483, 388, 9, 10, 34], [443, 372, 16, 8, 30], [572, 303, 12, 9, 50], [572, 483, 9, 9, 255], [594, 462, 8, 26, 44],
  [702, 403, 18, 10, 50], [732, 543, 20, 10, 90], [645, 582, 10, 34, 60], [655, 582, 12, 10, 150], [665, 572, 24, 14, 80], [655, 612, 18, 12, 90], [704, 630, 18, 10, 70], [712, 636, 8, 8, 120], [667, 612, 8, 8, 150],
];

function KenyaRaster() {
  const gray = (v: number) => `rgb(${v},${v},${v})`;
  return (
    <svg viewBox="269 184 1198 825" width="1198" height="825" className="block" shapeRendering="crispEdges">
      <g transform="translate(540 200) scale(0.40816 0.33333)">
        <path d={steppedPath(OUTLINE)} fill="#000" />
        {noiseCells().map((c, i) => (
          <rect key={i} x={c.x} y={c.y} width={CW} height={CH} fill={gray(c.v)} />
        ))}
        {SPOTS.map(([x, y, w, h, v], i) => (
          <rect key={i} x={x} y={y} width={w} height={h} fill={gray(v)} />
        ))}
        <path d="M335 72H353V77H335ZM427 180H433L438 215H434V206H427ZM1066 507H1092L1100 518V528H1090V520H1066ZM115 415H130V419H115Z" fill="#fff" />
        <path d="M451 290L459 282H465V540H459V528H451V480H434V387H443V370H451Z" fill="#e4e4e4" />
        <path d="M468 288H492V347H500V357H492V417H500V450H492V519H500V528H495V541H500V548H508V570H524V607H533V618H541V630H549V639H583V719H575V729H559V699H550V689H541V649H533V639H524V630H508V608H484V600H492V549H468Z" fill="#858585" />
        <g transform="translate(49 960) scale(.8167 1)">
          {WEST_SPOTS.map(([x, y, w, h, v], i) => (
            <rect key={i} x={x} y={y} width={w} height={h} fill={gray(v)} />
          ))}
          <path d="M46 352H66V362H80V372H90V388H44Z" fill="#c8c8c8" />
          <path d="M37 432H60V470H57V490H37Z" fill="#262626" />
          <path d="M37 495H68V503H80V522H68V532H62V538H40Z" fill="#909090" />
          <path d="M170 362H182V353H202V343H212V353H222V362H230V372H205L165 375L155 378L160 368Z" fill="#565656" />
          <path d="M160 378L210 373V382H160Z" fill="#333" />
          <path d="M130 400C145 385 155 376 208 372" stroke="#000" strokeWidth="2.500" fill="none" />
          <path d="M655 592H687V582H695V572H715V602H705V612H695V604H687V614H675V604H665V600H655Z" fill="#fff" />
        </g>
      </g>
    </svg>
  );
}

function Sep({ cls = "" }: { cls?: string }) {
  return <div className={"h-4 w-px shrink-0 bg-[#8f8f8f] " + cls} />;
}

function StatusBar() {
  return (
    <div className="flex h-[24px] shrink-0 items-center bg-[#f7f9f8] pb-px">
      <div className="ml-[5px] flex h-[22px] w-[100px] items-center justify-between border border-[#8a8a8a] bg-white pr-[3px] pl-[5px]">
        <span className="tracking-[-0.035em] text-[#222]">1:5,643,113</span>
        <Svg w={5} h={4}><path d="M0 0H5L2.500 4Z" fill="#555" /></Svg>
      </div>
      <Sep cls="ml-1" />
      <div className="ml-1 flex size-5 items-center justify-center border border-[#2a78ad] bg-[#8fc7ee]">
        <Svg w={16} h={16}><path d="M.600 .600H10V10H.600ZM5.500 .600V10M.600 5.500H10M11.500 8V15.500M7.500 11.700H15.500" stroke="#44708f" strokeWidth="1.100" /></Svg>
      </div>
      <Svg w={13} h={13} cls="ml-[3px]"><path d="M.5 .5H12.500V12.500H.500ZM3.500 .5V12.500M6.500 .5V12.500M9.500 .5V12.500M.5 3.500H12.500M.5 6.500H12.500M.5 9.500H12.500" stroke="#a3a3a3" /></Svg>
      <Svg w={17} h={15} cls="ml-[5px]"><path d="M2 13L6 5H15V13Z" fill="#cdeaf8" /><path d="M.500 1.500H4.500V4.500H.500ZM11.500 8.500H15.500V11.500H11.500ZM13.500 0V5M11 2.500H16" stroke="#666" /><path d="M4 13.500H16M5 3H9M7 9L10 5" stroke="#4b9fd6" strokeDasharray="2 1.500" /><rect x="0" y="11.500" width="3.500" height="3.500" fill="#4d9a58" /></Svg>
      <Svg w={16} h={16} cls="ml-1"><rect x="0" y="0" width="8" height="8" fill="#cfe8c8" /><path d="M8 0V16M0 8H16" stroke="#777" strokeDasharray="2 1" /><rect x="6" y="6" width="4" height="4" fill="#666" /></Svg>
      <Svg w={16} h={16} cls="ml-[3px]"><path d="M1 11V4L5 11V4" stroke="#3c93d0" strokeWidth="1.700" /><path d="M8 0V16M9 13L15 7" stroke="#666" /><path d="M11 1L13 5L15 2M9 9L13 5" stroke="#4b9fd6" strokeWidth="1.400" /></Svg>
      <div className="ml-[7px]"><Chevron w={7} sw={2} c="#222" /></div>
      <Sep cls="ml-[7px]" />
      <span className="ml-[291px] w-[146px] tracking-[-0.035em] text-[#4c4c4c]">39.9588096°E 5.6190139°N</span>
      <Chevron w={7} sw={2} c="#444" />
      <Sep cls="ml-[291px]" />
      <div className="ml-[7px]"><ZoomSel /></div>
      <span className="ml-[3px] w-[121px] text-[#a0a0a0]">Selected Features: 0</span>
      <Svg w={13} h={13}><rect x=".5" y=".5" width="12" height="12" stroke="#b0b0b0" /><path d="M3 3L6.500 7L5.500 10M6.500 7L11 4" stroke="#b0b0b0" /></Svg>
      <Sep cls="ml-[8px]" />
      <div className="ml-2 flex gap-[3px]"><i className="h-[14px] w-1 bg-[#6b6b6b]" /><i className="h-[14px] w-1 bg-[#6b6b6b]" /></div>
      <Sep cls="ml-[9px]" />
      <Svg w={16} h={16} cls="ml-[6px]"><path d="M1.500 7C2.500 1.500 10 .5 13.500 5M14.500 9C13.500 14.500 6 15.500 2.500 11" stroke="#4b9fd6" strokeWidth="2.200" /><path d="M15.500 0V7H9ZM.500 16V9H7Z" fill="#4b9fd6" /></Svg>
    </div>
  );
}

function MapView() {
  return (
    <div className="mt-[6px] ml-[6px] flex h-[875px] w-[1200px] shrink-0 flex-col">
      <div className="flex h-[22px] items-center justify-between">
        <div className="flex h-[22px] w-[77px] items-center rounded-t-[3px] bg-[#d1d3d6] pl-[6px]">
          <MapIcon />
          <span className="ml-[5px] w-[34px] text-[#4c4c4c]">Map</span>
          <Close c="#666" />
        </div>
        <div className="mr-[5px]"><Chevron w={7} c="#555" /></div>
      </div>
      <div className="h-[3px] bg-[#d1d3d6]" />
      <div className="flex flex-1 flex-col border border-t-0 border-[#cfd0d2] bg-white">
        <KenyaRaster />
        <StatusBar />
      </div>
    </div>
  );
}

/* ---------- geoprocessing pane ---------- */

const LayerDoc = () => <Svg w={16} h={14}><path d="M1.500 1C6 1.500 10 .3 14.500 .8L16 13C11 12 6 14.500 .3 13.500Z" fill="#e8d558" /></Svg>;

function Geoprocessing() {
  const rasters = ["ken_ppp_2020_5km", "Aggrega_ken_1", "ken_ppp_2020_1_ProjectRaster", "Raster Data\\ken_ppp_2020_1km_Agg", "Simulation Rasters\\ken_admin_one"];
  return (
    <div className="flex h-[855px] w-[415px] flex-col rounded-t-[3px] border border-[#0079c1] bg-[#f7f9f8] text-[#4c4c4c]">
      <div className="flex h-[30px] items-center pb-px pl-[6px]">
        <span className="w-[354px] text-[15.5px] text-[#0079c1]">Geoprocessing</span>
        <Chevron w={7} /><div className="ml-[10px]"><Pin /></div><div className="ml-[10px]"><Close /></div>
      </div>
      <div className="flex h-[26px] items-center justify-between pr-[6px] pl-[7px]">
        <Svg w={18} h={18}><circle cx="9" cy="9" r="8.300" stroke="#555" strokeWidth="1.200" /><path d="M9 4.500L4.500 9L9 13.500M5 9H14" stroke="#555" strokeWidth="1.900" /></Svg>
        <span className="pb-[2px] text-[14.5px]">Raster Calculator</span>
        <Svg w={18} h={18}><circle cx="9" cy="9" r="8.300" stroke="#555" strokeWidth="1.200" /><path d="M9 4V14M4 9H14" stroke="#555" strokeWidth="1.900" /></Svg>
      </div>
      <div className="mt-[8px] flex h-[24px] items-end pl-[9px]">
        <div className="h-[24px] w-[69px] border-b-2 border-[#0079c1] text-[12.5px] leading-[24px] font-medium whitespace-nowrap">Parameters</div>
        <div className="ml-[10px] h-[24px] w-[303px] text-[12.5px] leading-[24px]">Environments</div>
        <Svg w={16} h={16} cls="mb-1"><circle cx="8" cy="8" r="7.300" fill="#e3f2fb" stroke="#56a9dd" strokeWidth="1.200" /><path d="M5.800 6.200C5.800 3.300 10.300 3.500 10.200 6C10.100 7.500 8 7.600 8 9.800M8 11V12.500" stroke="#4b9fd6" strokeWidth="1.300" /></Svg>
      </div>
      <div className="mt-[9px] ml-[18px] h-[18px] leading-[18px]">Map Algebra expression</div>
      <div className="ml-[18px] flex h-[22px] items-center text-[#222]">
        <span className="w-[194px] pb-px">Rasters</span><FolderIcon />
        <span className="ml-[10px] w-[148px] pb-px">Tools</span>
        <Funnel w={17} h={20} f="#d5d5d5" s="#a5a5a5" />
      </div>
      <div className="mt-px ml-[18px] flex gap-2">
        <div className="flex h-[120px] w-[213px] flex-col overflow-hidden border border-[#b9bbbd] bg-white pl-px text-[#1c1c1c]">
          {rasters.map((r) => (
            <div key={r} className="flex h-[22px] shrink-0 items-center gap-[2px] overflow-hidden whitespace-nowrap"><LayerDoc /><span className="pb-px">{r}</span></div>
          ))}
        </div>
        <div className="flex h-[120px] w-[166px] border border-[#b9bbbd] bg-white text-[#222]">
          <div className="flex w-[147px] flex-col overflow-hidden pl-[10px]">
            <div className="flex h-[23px] shrink-0 items-center pl-[6px]">RoundDown</div>
            <div className="my-[2px] flex h-[19px] shrink-0 items-center border border-[#dadada] bg-[#f5f5f5] pl-[5px]">RoundUp</div>
            <div className="flex h-[23px] shrink-0 items-center pl-[6px]">Square</div>
            <div className="flex h-[23px] shrink-0 items-center pl-[6px]">SquareRoot</div>
            <div className="-ml-[5px] flex h-[23px] shrink-0 items-center text-[#969696]">Trigonometric</div>
          </div>
          <div className="flex w-[17px] flex-col items-center bg-[#ececec] py-[6px]">
            <Chevron up w={6} c="#555" />
            <div className="mt-[45px] h-[21px] w-[9px] rounded-full bg-[#b5b5b5]" />
            <div className="mt-auto"><Chevron w={6} c="#555" /></div>
          </div>
        </div>
      </div>
      <div className="mt-1 ml-[18px] flex h-[60px] w-[387px] flex-col border border-[#8a8a8a] bg-white">
        <div className="flex h-[41px]">
          <div className="flex-1 pl-[7px] font-['Liberation_Mono',monospace] text-[11.6px] leading-[17px] tracking-normal text-[#222]">
            RoundUp(<span className="text-[#9b1c1c]">"Aggrega_ken_1"</span>)
          </div>
          <div className="flex w-[17px] flex-col items-center justify-between bg-[#ececec] py-[6px]"><Chevron up w={6} c="#555" /><Chevron w={6} c="#555" /></div>
        </div>
        <div className="flex flex-1">
          <div className="flex flex-1 items-center justify-between bg-[#f3f3f3] px-[6px]">
            <Svg w={5} h={8}><path d="M4 1L1 4L4 7" stroke="#ccc" strokeWidth="1.200" /></Svg>
            <Svg w={5} h={8}><path d="M1 1L4 4L1 7" stroke="#ccc" strokeWidth="1.200" /></Svg>
          </div>
          <div className="w-[17px] bg-[#fafafa]" />
        </div>
      </div>
      <div className="mt-2 ml-[386px]"><Svg w={16} h={14}><path d="M0 3L1.500 1.500L6 .500L16 7L15.500 10.500L10 13.500L8 13L.500 6Z" fill="#e9a594" /><path d="M.500 3.500L9 9.500L16 7M9 9.500V13" stroke="#f9e2dc" /></Svg></div>
      <div className="mt-[7px] ml-[3px] flex h-[16px] items-center">
        <Svg w={12} h={12}><path d="M6 .5L11.700 11.500H.300Z" fill="#f6b877" stroke="#eda35c" /><path d="M6 3.500V8M6 9V10.500" stroke="#333" strokeWidth="1.600" /></Svg>
        <span className="ml-[3px] pb-px">Output raster</span>
      </div>
      <div className="ml-[18px] flex items-center">
        <div className="flex h-[22px] w-[361px] items-center border border-[#8a8a8a] bg-white pb-[2px] pl-1">ken_ppp_2020_5km</div>
        <div className="ml-[7px]"><FolderIcon /></div>
      </div>
      <div className="flex-1" />
      <div className="mr-[6px] mb-[6px] flex h-6 w-[85px] self-end rounded-[2px] border border-[#b8dff5] bg-white">
        <div className="flex w-[69px] items-center border-r border-[#b8dff5] pl-[11px]">
          <Svg w={16} h={16}><circle cx="8" cy="8" r="7.300" fill="#d6ebf8" stroke="#7fbde4" strokeWidth="1.200" /><path d="M6 4L11.500 8L6 12Z" fill="#4b9fd6" /></Svg>
          <span className="ml-[6px] pb-px text-[12px]">Run</span>
        </div>
        <div className="flex flex-1 items-center justify-center"><Chevron w={5} /></div>
      </div>
      <div className="mx-[4px] mb-[2px] flex h-[44px] items-center bg-[#e3efe2]">
        <div className="ml-[13px]"><Svg w={12} h={12}><circle cx="6" cy="6" r="6" fill="#5fa663" /><path d="M3 6L5.200 8.300L9 3.800" stroke="#fff" strokeWidth="1.700" /></Svg></div>
        <div className="ml-[17px] flex w-[347px] flex-col pb-[2px]">
          <span className="leading-[19px] tracking-[-0.012em]">Raster Calculator completed.</span>
          <div className="flex leading-[19px] text-[#56a5d8]"><span className="w-[70px]">View Details</span><span>Open History</span></div>
        </div>
        <Close s={9} c="#777" sw={1.500} />
      </div>
    </div>
  );
}

function RightDock() {
  return (
    <div className="mt-[6px] ml-[6px] flex w-[415px] shrink-0 flex-col">
      <Geoprocessing />
      <div className="-mt-px flex h-[21px] items-center pl-[6px] text-[#444]">
        <span className="w-[53px]">Catalog</span>
        <span className="w-[55px]">Element</span>
        <span className="w-[66px]">Symbology</span>
        <div className="flex h-[21px] w-[90px] items-center justify-center rounded-b-[3px] border border-t-0 border-[#0079c1] bg-[#f7f9f8] text-[#0079c1]">Geoprocessing</div>
        <span className="ml-[6px]">Export</span>
      </div>
    </div>
  );
}

export default function App() {
  return (
    <div className="flex h-[1040px] w-[1920px] flex-col overflow-hidden bg-[#eaeaea] font-['Noto_Sans','Open_Sans',sans-serif] text-[11.5px] leading-[14px] tracking-[-0.02em] whitespace-nowrap">
      <div className="flex flex-col bg-[#f7f9f8]">
        <TitleBar />
        <TabRow />
        <Ribbon />
      </div>
      <div className="flex flex-1">
        <Contents />
        <MapView />
        <RightDock />
        <div className="mt-[6px] ml-[7px] flex h-[82px] flex-1 justify-between">
          <span className="w-[16px] text-center text-[11.5px] leading-[16px] text-[#444] [writing-mode:vertical-rl]">Create Features</span>
          <div className="h-[81px] w-[6px] bg-[#c3c4c7]" />
        </div>
      </div>
    </div>
  );
}
